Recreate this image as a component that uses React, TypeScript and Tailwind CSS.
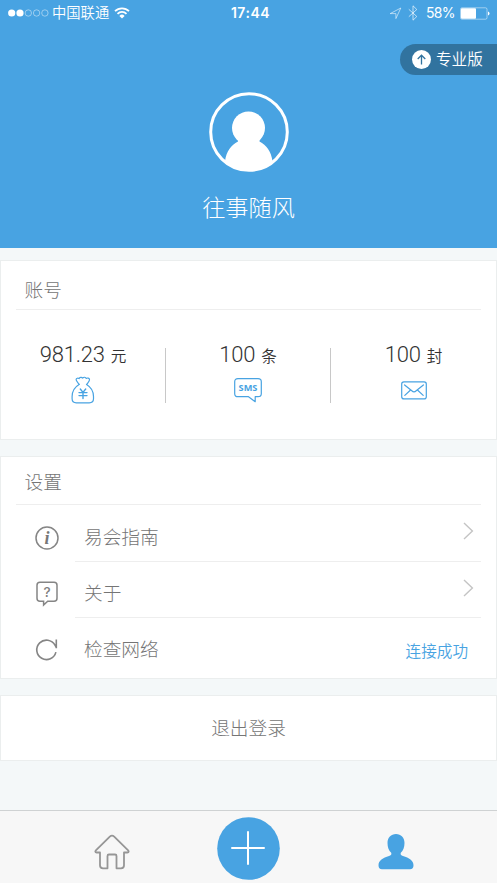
import { ReactNode } from "react";

const stats = [
  { value: "981.23", unit: "元", icon: <MoneyBagIcon /> },
  { value: "100", unit: "条", icon: <SmsIcon /> },
  { value: "100", unit: "封", icon: <MailIcon /> },
];

function StatusBar() {
  return (
    <div className="flex h-[26px] items-center pl-2 pr-[7px] text-[14px] leading-none">
      <div className="flex flex-1 items-center">
        <svg width="42" height="8" viewBox="0 0 42 8">
          <circle cx="3.7" cy="4" r="3.6" fill="#fff" />
          <circle cx="12" cy="4" r="3.6" fill="#fff" />
          {[20.3, 28.6, 36.9].map((x) => (
            <circle key={x} cx={x} cy="4" r="3.2" fill="none" stroke="#fff" strokeOpacity=".75" strokeWidth=".6" />
          ))}
        </svg>
        <span className="ml-[2px] pt-px text-[14.3px] font-[350]">中国联通</span>
        <svg className="ml-[5px]" width="16" height="12" viewBox="0 0 16 12" fill="none" stroke="#fff" strokeWidth="1.8">
          <path d="M1 4.2a10 10 0 0 1 14 0M3.5 6.8a6.4 6.4 0 0 1 9 0" />
          <path d="M8 11.4 5.4 8.9a3.7 3.7 0 0 1 5.2 0Z" fill="#fff" stroke="none" />
        </svg>
      </div>
      <span className="ml-[3px] text-[14px] font-semibold tracking-[0.5px]">17:44</span>
      <div className="flex flex-1 items-center justify-end">
        <svg width="13" height="13" viewBox="0 0 13 13" fill="none" stroke="#fff" strokeOpacity=".7" strokeWidth=".8">
          <path d="M1.2 6.6 11.8 1 6.9 11.6V6.6Z" />
        </svg>
        <svg className="ml-[6px]" width="10" height="16" viewBox="0 0 10 16" fill="none" stroke="#fff" strokeOpacity=".65" strokeWidth="1">
          <path d="m.8 4.3 8 7.2L5 15.2V.8l3.8 3.7-8 7.2" />
        </svg>
        <span className="ml-[8px] text-[14px] tracking-[-0.6px]">58%</span>
        <svg className="ml-[5px]" width="30" height="13" viewBox="0 0 30 13">
          <rect x=".5" y=".8" width="26.5" height="11.4" rx="1.5" fill="none" stroke="#fff" strokeOpacity=".6" strokeWidth=".8" />
          <rect x="1" y="1.3" width="15" height="10.4" rx="1" fill="#fff" />
          <path d="M28 4.5q1.5.4 1.5 2t-1.5 2Z" fill="#fff" />
        </svg>
      </div>
    </div>
  );
}

function MoneyBagIcon() {
  return (
    <svg width="24" height="28" viewBox="0 0 24 28" fill="none" stroke="#48a3e2" strokeWidth="1.2" strokeLinejoin="round" strokeLinecap="round">
      <path d="M8.2 8.3C6.8 6.4 4.8 4.6 5.1 3.4c.3-1.300 2-1.500 3-.8.5-1.500 2.700-1.700 3.600-.5 1-1.300 2.900-1.100 3.500.3 1.200-.8 3-.3 3.300.9.300 1.400-1.200 2.900-2.700 5" />
      <path d="M8.100 8.400C3.600 11 1.100 15 1.100 20.600v2.200c0 2.800 1.300 4 4.200 4h13c2.900 0 4.200-1.200 4.200-4v-2.200c0-5.600-2.500-9.600-7-12.200" />
      <path d="m9.300 13 2.700 3.400 2.700-3.400M12 16.400v6.200M8 16.600h8M8 19.600h8" strokeWidth="1.400" />
    </svg>
  );
}

function SmsIcon() {
  return (
    <svg width="28" height="25" viewBox="0 0 28 25">
      <path
        d="M4 .7h20q3.3 0 3.3 3v12q0 3-3.3 3h-2.800v5L14.500 18.700H4q-3.300 0-3.300-3v-12Q.7.7 4 .7Z"
        fill="none" stroke="#48a3e2" strokeWidth="1.2" strokeLinejoin="round"
      />
      <text x="14" y="13" textAnchor="middle" fill="#48a3e2" fontSize="9.2" fontWeight="700" fontFamily="Open Sans, sans-serif">
        SMS
      </text>
    </svg>
  );
}

function MailIcon() {
  return (
    <svg width="26" height="19" viewBox="0 0 26 19" fill="none" stroke="#48a3e2" strokeWidth="1.2" strokeLinecap="round">
      <rect x=".7" y=".9" width="24.6" height="17" rx="2.2" />
      <path d="m3.6 4 7.2 5.800q2.200 2.100 4.400 0L22.400 4M3.800 14.400l5.500-5.200M22.200 14.400l-5.500-5.200" />
    </svg>
  );
}

function InfoIcon() {
  return (
    <svg width="24" height="24" viewBox="0 0 24 24">
      <circle cx="12" cy="12" r="11" fill="none" stroke="#858585" strokeWidth="1.5" />
      <text x="12" y="17.8" textAnchor="middle" fill="#777" fontSize="18" fontStyle="italic" fontWeight="700" fontFamily="Liberation Serif, serif">
        i
      </text>
    </svg>
  );
}

function QuestionIcon() {
  return (
    <svg width="24" height="26" viewBox="0 0 24 26">
      <path
        d="M5 1.200h14q3 0 3 3v13q0 3-3 3h-6.300L8.600 24v-3.800H5q-3 0-3-3v-13q0-3 3-3Z"
        fill="none" stroke="#858585" strokeWidth="1.5"
      />
      <text x="12" y="15.8" textAnchor="middle" fill="#808080" fontSize="13.5" fontWeight="500" fontFamily="Inter, sans-serif">
        ?
      </text>
    </svg>
  );
}

function RefreshIcon() {
  return (
    <svg className="-mt-[7px]" width="24" height="24" viewBox="0 0 24 24" fill="none" stroke="#858585" strokeWidth="1.6">
      <path d="M20.900 14.100A9.700 9.700 0 1 1 20 7.200l1.200 2.100M21.300 1.600v8.600" />
    </svg>
  );
}

function Chevron() {
  return (
    <svg className="-mt-[3px] mr-[7px]" width="11" height="18" viewBox="0 0 11 18" fill="none" stroke="#c4c4c4" strokeWidth="1.4">
      <path d="m1 1 8.400 8L1 17" />
    </svg>
  );
}

function SettingRow({ icon, label, right, last }: { icon: ReactNode; label: string; right: ReactNode; last?: boolean }) {
  return (
    <div className="flex pr-[15px]">
      <div className="flex w-[74px] items-center pl-[34px] pt-[9px]">{icon}</div>
      <div
        className={
          last
            ? "flex h-[61px] flex-1 items-center justify-between pl-[9px]"
            : "flex h-[56.5px] flex-1 items-center justify-between border-b border-[#eee] pl-[9px]"
        }
      >
        <span className={last ? "pt-[3px] text-[18.7px]" : "pt-[10px] text-[18.7px]"}>{label}</span>
        {right}
      </div>
    </div>
  );
}

export default function App() {
  return (
    <div className="flex h-[883px] w-[497px] flex-col overflow-hidden bg-[#f4f8f9] font-['Inter','Noto_Sans_CJK_SC',sans-serif] text-[#757575]">
      <header className="flex h-[248px] shrink-0 flex-col bg-[#48a3e2] text-white">
        <StatusBar />
        <div className="mt-[18px] flex h-[31px] w-[97px] items-center self-end rounded-l-full bg-[#31739f] pl-[12px] text-[15.6px] font-[350]">
          <svg className="mr-[5px]" width="19" height="19" viewBox="0 0 19 19">
            <circle cx="9.5" cy="9.5" r="9.5" fill="#fff" />
            <path d="M9.5 14.5v-9M5.7 9l3.800-3.800L13.300 9" fill="none" stroke="#31739f" strokeWidth="1.3" />
          </svg>
          <span className="pt-px leading-none">专业版</span>
        </div>
        <div className="mt-[17px] flex flex-col items-center">
          <svg width="80" height="80" viewBox="0 0 80 80">
            <defs>
              <clipPath id="avatar">
                <circle cx="40" cy="40" r="39" />
              </clipPath>
            </defs>
            <g fill="#fff" clipPath="url(#avatar)">
              <circle cx="39.5" cy="36" r="16.5" />
              <path d="M29 47.500h21.500v2C57.500 53.500 62 59 63.500 69v11H16V69C17.500 59 22 53.500 29 49.500Z" />
            </g>
            <circle cx="40" cy="40" r="38.3" fill="none" stroke="#fff" strokeWidth="3" />
          </svg>
          <h1 className="mt-[19px] text-[23.2px] font-light leading-[35px]">往事随风</h1>
        </div>
      </header>

      <section className="mt-[12px] h-[180px] shrink-0 border border-[#ebeeee] bg-white">
        <h2 className="mx-[15px] h-[49px] border-b border-[#eee] pl-[8.5px] pt-[16px] text-[18.7px] font-light leading-[28px]">账号</h2>
        <div className="grid grid-cols-3 pt-[38px]">
          {stats.map((s, i) => (
            <div
              key={s.unit}
              className={
                i < 2
                  ? "flex h-[55px] flex-col items-center border-r border-[#c8c8c8] text-[#333]"
                  : "flex h-[55px] flex-col items-center text-[#333]"
              }
            >
              <div className="-mt-[4px] flex h-[29px] items-baseline gap-[6px] leading-none">
                <span className="font-['Roboto'] text-[22px] font-light tracking-[-0.2px]">{s.value}</span>
                <span className="text-[15.6px] font-[350]">{s.unit}</span>
              </div>
              <div className="flex h-[36px] shrink-0 items-center pt-[10px]">{s.icon}</div>
            </div>
          ))}
        </div>
      </section>

      <section className="mt-[16px] h-[223px] shrink-0 border border-[#ebeeee] bg-white font-light">
        <h2 className="mx-[15px] h-[48px] border-b border-[#eee] pl-[8.5px] pt-[12px] text-[18.7px] font-light leading-[28px]">设置</h2>
        <SettingRow icon={<InfoIcon />} label="易会指南" right={<Chevron />} />
        <SettingRow icon={<QuestionIcon />} label="关于" right={<Chevron />} />
        <SettingRow
          icon={<RefreshIcon />}
          label="检查网络"
          right={<span className="mr-[13px] pt-[6px] text-[15.6px] font-[350] text-[#48a3e2]">连接成功</span>}
          last
        />
      </section>

      <button className="mt-[16px] h-[66px] shrink-0 border border-[#ebeeee] bg-white pt-[2px] text-[18.7px] font-light">退出登录</button>

      <nav className="mt-auto flex h-[73px] shrink-0 items-start border-t border-[#cfd2d3] bg-[#f7f7f7]">
        <svg className="ml-[94px] mt-[23px]" width="36" height="36" viewBox="0 0 36 36" fill="none" stroke="#969696" strokeWidth="1.8" strokeLinejoin="round">
          <path d="M6 18.500H2.800q-2.500-.5-.7-2.300L15.800 2.600q2.200-2 4.400 0l13.700 13.600q1.800 1.800-.7 2.300H30v12.800q0 3-3 3h-4.500V22q0-1.500-1.500-1.500h-6q-1.500 0-1.500 1.500v12.300H9q-3 0-3-3Z" />
        </svg>
        <svg className="ml-[87px] mt-[6px]" width="63" height="63" viewBox="0 0 63 63">
          <circle cx="31.5" cy="31.5" r="31.3" fill="#48a3e2" />
          <path d="M31 15v32M15 31h32" stroke="#fff" strokeWidth="2" strokeLinecap="round" />
        </svg>
        <svg className="ml-[98px] mt-[23px]" width="36" height="36" viewBox="0 0 36 36" fill="#48a3e2">
          <path d="M18 0c5 0 8.500 3.500 8.500 9 0 4.500-1.300 7.500-3.700 9.700-.7 1.700.3 2.600 2.200 3.200 6 1.700 10.500 4.600 10.500 9.300 0 2.700-1.200 4.100-3.500 4.100H4C1.700 35.300.5 33.900.5 31.200c0-4.700 4.500-7.600 10.500-9.300 1.900-.6 2.900-1.500 2.200-3.200C10.800 16.500 9.500 13.500 9.500 9 9.500 3.500 13 0 18 0Z" />
        </svg>
      </nav>
    </div>
  );
}
